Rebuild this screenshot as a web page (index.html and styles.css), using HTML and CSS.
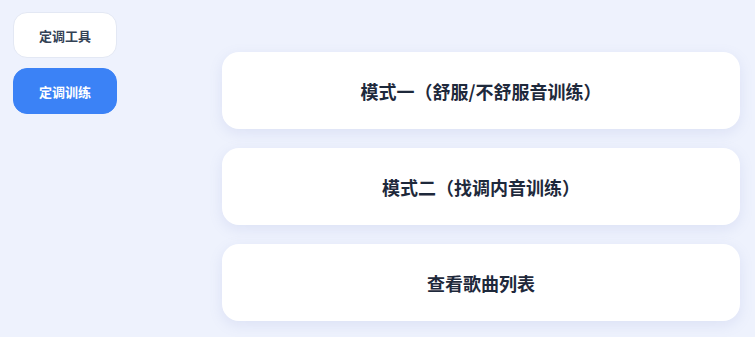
FILE: index.html
```html
<!DOCTYPE html>
<html lang="zh">
<head>
<meta charset="utf-8">
<link rel="stylesheet" href="styles.css">
</head>
<body>
<div class="app">
  <nav class="sidebar">
    <button class="nav-btn">定调工具</button>
    <button class="nav-btn active">定调训练</button>
  </nav>
  <main class="main">
    <div class="card">模式一（舒服/不舒服音训练）</div>
    <div class="card">模式二（找调内音训练）</div>
    <div class="card">查看歌曲列表</div>
  </main>
</div>
</body>
</html>
```
FILE: styles.css
```css
* { box-sizing: border-box; }
html, body { margin: 0; padding: 0; }
body {
  background: #eef2fd;
  font-family: "Noto Sans CJK SC", "Noto Sans", sans-serif;
  width: 755px;
  height: 337px;
  overflow: hidden;
}
.app {
  display: flex;
  align-items: flex-start;
}
.sidebar {
  display: flex;
  flex-direction: column;
  gap: 10px;
  padding: 12px 0 0 13px;
  width: 222px;
}
.nav-btn {
  width: 104px;
  height: 46px;
  border-radius: 14px;
  border: 1px solid #e3e8f4;
  background: #ffffff;
  color: #334155;
  font-family: inherit;
  font-size: 13px;
  font-weight: 700;
  padding: 0;
}
.nav-btn.active {
  background: #3b82f6;
  border-color: #3b82f6;
  color: #ffffff;
}
.main {
  display: flex;
  flex-direction: column;
  gap: 19px;
  padding-top: 52px;
  width: 518px;
}
.card {
  height: 77px;
  background: #ffffff;
  border-radius: 17px;
  box-shadow: 0 4px 14px rgba(110, 130, 200, 0.14);
  display: flex;
  align-items: center;
  justify-content: center;
  color: #1e293b;
  font-size: 18px;
  font-weight: 700;
}
```
